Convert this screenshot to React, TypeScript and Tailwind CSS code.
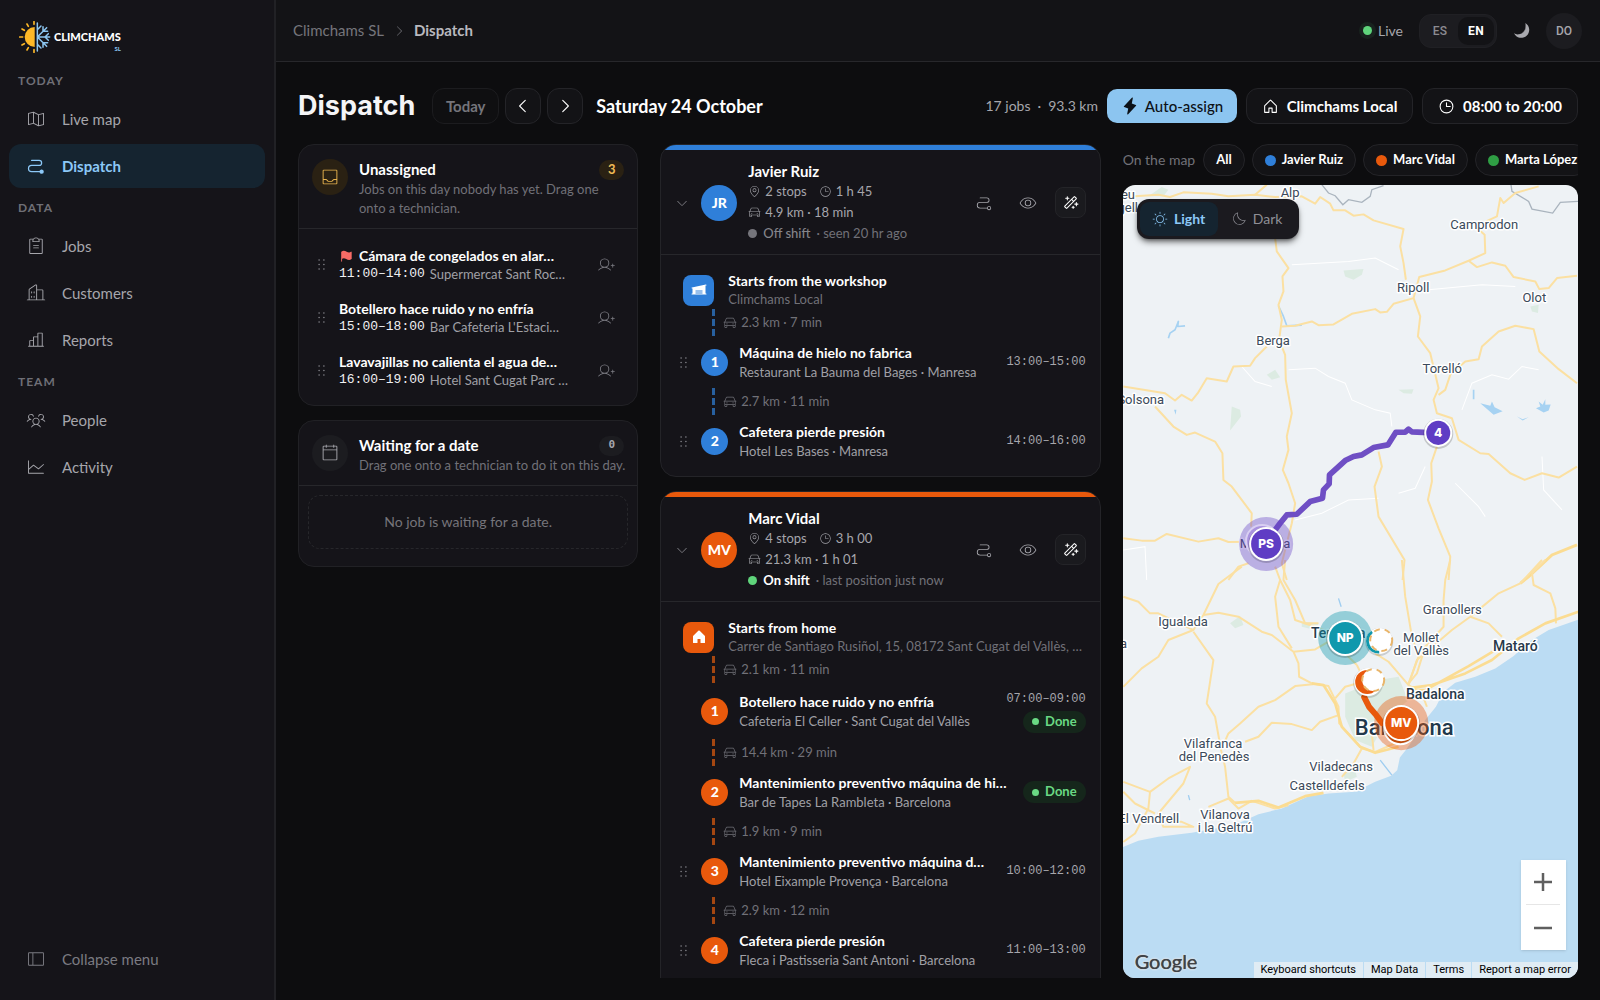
import type { ReactNode } from 'react';
import type { IconType } from 'react-icons';
import {
  PiBuildingsLight,
  PiCalendarBlankLight,
  PiCaretDownLight,
  PiCaretLeft,
  PiCaretRight,
  PiCaretRightLight,
  PiCarLight,
  PiChartBarLight,
  PiChartLineLight,
  PiClipboardTextLight,
  PiClock,
  PiClockLight,
  PiDotsSixVertical,
  PiEyeLight,
  PiFlagFill,
  PiHouse,
  PiHouseFill,
  PiLightningFill,
  PiMagicWand,
  PiMapPinLight,
  PiMapTrifoldLight,
  PiMoonLight,
  PiPathFill,
  PiPathLight,
  PiSidebarSimpleLight,
  PiSunLight,
  PiTrayLight,
  PiUserPlusLight,
  PiUsersThreeLight,
  PiWarehouseFill,
} from 'react-icons/pi';

type NavItem = { label: string; icon: IconType; active?: boolean };

const nav: { title: string; items: NavItem[] }[] = [
  {
    title: 'TODAY',
    items: [
      { label: 'Live map', icon: PiMapTrifoldLight },
      { label: 'Dispatch', icon: PiPathFill, active: true },
    ],
  },
  {
    title: 'DATA',
    items: [
      { label: 'Jobs', icon: PiClipboardTextLight },
      { label: 'Customers', icon: PiBuildingsLight },
      { label: 'Reports', icon: PiChartBarLight },
    ],
  },
  {
    title: 'TEAM',
    items: [
      { label: 'People', icon: PiUsersThreeLight },
      { label: 'Activity', icon: PiChartLineLight },
    ],
  },
];

function Logo() {
  return (
    <div className="flex items-center gap-[3px]">
      <svg viewBox="0 0 96 96" className="h-8 w-8" fill="none" aria-hidden="true">
        <path d="M47 18a30 30 0 0 0 0 60z" fill="#fdb827" />
        <g stroke="#fdb827" strokeWidth="5" strokeLinecap="round">
          <path d="M45 2v8M45 86v8M24 9l4 7M24 87l4-7M9 24l7 4M9 72l7-4M2 48h9" />
        </g>
        <g stroke="#8cc5f0" strokeWidth="4.5" strokeLinecap="round" strokeLinejoin="round">
          <path d="M55 6v84M55 48h37M55 48l28-28M55 48l28 28M55 26l11-11M55 70l11 11M72 31V17M72 31h14M72 65v14M72 65h14M78 48l10-10M78 48l10 10" />
        </g>
      </svg>
      <span className="flex flex-col items-end pt-2.5 leading-none">
        <span className="text-[11px] leading-[10px] font-black text-white">CLIMCHAMS</span>
        <span className="pt-1 text-[6px] leading-[6px] font-bold text-[#8cc5f0]">SL</span>
      </span>
    </div>
  );
}

function Sidebar() {
  return (
    <aside className="flex w-[276px] shrink-0 flex-col border-r-2 border-[#212125] bg-[#151419] px-[9px]">
      <div className="px-2.5 pt-[21px]">
        <Logo />
      </div>
      <nav className="pt-3">
        {nav.map((group) => (
          <div key={group.title} className="pb-1">
            <h2 className="flex h-8 items-center px-[9px] text-xs font-bold tracking-[1px] text-[#6f6f76]">{group.title}</h2>
            <ul className="flex flex-col gap-[3px]">
              {group.items.map(({ label, icon: Icon, active }) => (
                <li key={label}>
                  <a
                    href="#"
                    aria-current={active ? 'page' : undefined}
                    className={
                      active
                        ? 'flex h-11 items-center gap-4 rounded-xl bg-[#152430] px-[17px] text-[15px] font-bold text-[#8cc8f7]'
                        : 'flex h-11 items-center gap-4 rounded-xl px-[17px] text-[15px] text-[#a6a6ac]'
                    }
                  >
                    <Icon size={20} />
                    {label}
                  </a>
                </li>
              ))}
            </ul>
          </div>
        ))}
      </nav>
      <button type="button" className="mt-auto mb-[19px] flex h-11 items-center gap-4 px-[17px] text-[15px] text-[#7b7b82]">
        <PiSidebarSimpleLight size={20} />
        Collapse menu
      </button>
    </aside>
  );
}

function TopBar() {
  return (
    <header className="flex h-[62px] shrink-0 items-center justify-between border-b border-[#27272b] bg-[#131316] pr-[18px] pl-[17px]">
      <nav aria-label="Breadcrumb" className="flex items-center gap-2 text-[15px]">
        <a href="#" className="text-[#75757b]">
          Climchams SL
        </a>
        <PiCaretRightLight size={14} className="text-[#75757b]" />
        <span className="font-bold text-[#b9b9bf]">Dispatch</span>
      </nav>
      <div className="flex items-center">
        <span className="h-[9px] w-[9px] rounded-full bg-[#5fd47b] ring-4 ring-[#5fd47b]/8" />
        <span className="pl-1.5 text-sm text-[#a6a6ac]">Live</span>
        <div className="ml-4 flex h-[34px] items-center rounded-xl border border-[#202024] bg-[#1c1c20] p-0.5 font-['Roboto',sans-serif] text-xs font-medium tracking-wide">
          <button type="button" className="h-7 w-9 text-[#8b8b91]">
            ES
          </button>
          <button type="button" className="h-7 w-9 rounded-[10px] bg-[#131316] font-bold text-white">
            EN
          </button>
        </div>
        <button type="button" aria-label="Dark theme" className="ml-[15px] p-0.5">
          <svg viewBox="0 0 48 48" className="h-4 w-4" aria-hidden="true">
            <path d="M34 0a24 24 0 1 1-34 31a19 19 0 0 0 14 3C30 32 38 16 34 0z" fill="#a9a9ae" />
            <path d="M34 0a24 24 0 0 1-20 34C30 32 38 16 34 0z" fill="#6f6f75" />
          </svg>
        </button>
        <button type="button" className="ml-3.5 h-9 w-9 rounded-full bg-[#1c1c20] font-['Roboto',sans-serif] text-xs font-medium text-[#a6a6ac]">
          DO
        </button>
      </div>
    </header>
  );
}

const outlineButton =
  'flex h-9 items-center justify-center rounded-xl border border-[#242428] bg-[#131316] text-white';

function PageHeader() {
  return (
    <div className="flex items-center justify-between pt-[26px] pb-5">
      <div className="flex items-center">
        <h1 className="pr-[17px] font-['Inter',sans-serif] text-[27px] leading-9 font-bold text-[#f4f4f6]">Dispatch</h1>
        <button type="button" className="h-9 w-[67px] rounded-xl border border-[#1c1c1f] bg-[#0f0f11] text-[15px] font-bold text-[#75757b]">
          Today
        </button>
        <button type="button" aria-label="Previous day" className={`${outlineButton} ml-1.5 w-9`}>
          <PiCaretLeft size={18} />
        </button>
        <button type="button" aria-label="Next day" className={`${outlineButton} ml-1.5 w-9`}>
          <PiCaretRight size={18} />
        </button>
        <span className="pl-[13px] text-lg leading-6 font-bold text-white">Saturday 24 October</span>
      </div>
      <div className="flex items-center gap-[9px] text-[15px] font-bold text-white">
        <p className="flex gap-[7px] text-sm font-normal text-[#a6a6ac]">
          <span>17 jobs</span>
          <span>·</span>
          <span>93.3 km</span>
        </p>
        <button type="button" className="flex h-[34px] w-[130px] items-center justify-center gap-1.5 rounded-[10px] bg-[#8cc5f0] font-medium text-[#0c1117]">
          <PiLightningFill size={18} />
          Auto-assign
        </button>
        <button type="button" className={`${outlineButton} w-[167px] gap-2`}>
          <PiHouse size={17} />
          Climchams Local
        </button>
        <button type="button" className={`${outlineButton} w-[156px] gap-2`}>
          <PiClock size={17} />
          08:00 to 20:00
        </button>
      </div>
    </div>
  );
}

type QueueProps = {
  title: string;
  text: string;
  count: number;
  icon: ReactNode;
  warm?: boolean;
  children: ReactNode;
};

function Queue({ title, text, count, icon, warm, children }: QueueProps) {
  return (
    <section className="rounded-2xl border border-[#212125] bg-[#151419]">
      <header className="border-b border-[#27272b] px-[13px] pt-3.5 pb-2.5">
        <div className="flex gap-[11px]">
          <span
            className={
              warm
                ? 'flex h-9 w-9 shrink-0 items-center justify-center rounded-full bg-[#2a2113] text-[#e8b44f]'
                : 'flex h-9 w-9 shrink-0 items-center justify-center rounded-full bg-[#1c1c20] text-[#a6a6ac]'
            }
          >
            {icon}
          </span>
          <div className="min-w-0 flex-1">
            <div className="flex h-[21px] items-center justify-between">
              <h2 className="text-[15px] font-bold text-white">{title}</h2>
              <span
                className={
                  warm
                    ? 'flex h-5 w-[25px] items-center justify-center rounded-full bg-[#2a2113] text-[13px] font-bold text-[#f0bb55]'
                    : "flex h-5 w-[25px] items-center justify-center rounded-full bg-[#1c1c20] font-['DejaVu_Sans_Mono',monospace] text-[11px] font-bold text-[#a6a6ac]"
                }
              >
                {count}
              </span>
            </div>
            <p className={warm ? 'pr-2 text-[13px] leading-[19px] text-[#717178]' : '-mr-2 text-[13px] leading-[19px] text-[#717178]'}>{text}</p>
          </div>
        </div>
      </header>
      {children}
    </section>
  );
}

const unassigned = [
  { title: 'Cámara de congelados en alar…', time: '11:00–14:00', place: 'Supermercat Sant Roc…', flag: true },
  { title: 'Botellero hace ruido y no enfría', time: '15:00–18:00', place: "Bar Cafeteria L'Estaci…" },
  { title: 'Lavavajillas no calienta el agua de…', time: '16:00–19:00', place: 'Hotel Sant Cugat Parc …' },
];

function QueueColumn() {
  return (
    <div className="flex min-w-0 flex-col gap-3.5">
      <Queue warm title="Unassigned" text="Jobs on this day nobody has yet. Drag one onto a technician." count={3} icon={<PiTrayLight size={20} />}>
        <ul className="pt-[9px] pb-2">
          {unassigned.map((job) => (
            <li key={job.title} className="flex h-[53px] items-center px-3.5">
              <PiDotsSixVertical size={17} className="shrink-0 text-[#85858b]" />
              <div className="min-w-0 flex-1 pl-[9px]">
                <p className="flex items-center gap-1.5 text-sm leading-[19px] font-bold text-white">
                  {job.flag && <PiFlagFill size={14} className="shrink-0 text-[#f66b66]" />}
                  <span className="truncate">{job.title}</span>
                </p>
                <p className="flex gap-[5px] text-[13px] leading-[18px] text-[#a0a0a6]">
                  <span className="shrink-0 font-['Liberation_Mono',monospace] text-[#f0f0f2]">{job.time}</span>
                  <span className="whitespace-nowrap">{job.place}</span>
                </p>
              </div>
              <button type="button" aria-label="Assign" className="flex h-8 w-[34px] items-center justify-center text-[#7b7b82]">
                <PiUserPlusLight size={18} />
              </button>
            </li>
          ))}
        </ul>
      </Queue>
      <Queue title="Waiting for a date" text="Drag one onto a technician to do it on this day." count={0} icon={<PiCalendarBlankLight size={20} />}>
        <div className="px-[9px] pt-[9px] pb-[17px]">
          <p className="flex h-[54px] items-center justify-center rounded-xl border border-dashed border-[#27272b] text-sm text-[#75757b]">
            No job is waiting for a date.
          </p>
        </div>
      </Queue>
    </div>
  );
}

type Stop = { leg: string; title: string; place: string; time?: string; done?: boolean };
type Tech = {
  name: string;
  initials: string;
  stops: string;
  hours: string;
  drive: string;
  onShift: boolean;
  seen: string;
  fill: string;
  dash: string;
  start: { icon: IconType; title: string; place: string };
  route: Stop[];
};

const techs: Tech[] = [
  {
    name: 'Javier Ruiz',
    initials: 'JR',
    stops: '2 stops',
    hours: '1 h 45',
    drive: '4.9 km · 18 min',
    onShift: false,
    seen: '· seen 20 hr ago',
    fill: 'bg-[#2f7fd9]',
    dash: 'bg-[repeating-linear-gradient(#28609f_0_7px,transparent_7px_10px)]',
    start: { icon: PiWarehouseFill, title: 'Starts from the workshop', place: 'Climchams Local' },
    route: [
      { leg: '2.3 km · 7 min', title: 'Máquina de hielo no fabrica', place: 'Restaurant La Bauma del Bages · Manresa', time: '13:00–15:00' },
      { leg: '2.7 km · 11 min', title: 'Cafetera pierde presión', place: 'Hotel Les Bases · Manresa', time: '14:00–16:00' },
    ],
  },
  {
    name: 'Marc Vidal',
    initials: 'MV',
    stops: '4 stops',
    hours: '3 h 00',
    drive: '21.3 km · 1 h 01',
    onShift: true,
    seen: '· last position just now',
    fill: 'bg-[#e8590c]',
    dash: 'bg-[repeating-linear-gradient(#a54711_0_7px,transparent_7px_10px)]',
    start: { icon: PiHouseFill, title: 'Starts from home', place: 'Carrer de Santiago Rusiñol, 15, 08172 Sant Cugat del Vallès, …' },
    route: [
      { leg: '2.1 km · 11 min', title: 'Botellero hace ruido y no enfría', place: 'Cafeteria El Celler · Sant Cugat del Vallès', time: '07:00–09:00', done: true },
      { leg: '14.4 km · 29 min', title: 'Mantenimiento preventivo máquina de hi…', place: 'Bar de Tapes La Rambleta · Barcelona', done: true },
      { leg: '1.9 km · 9 min', title: 'Mantenimiento preventivo máquina d…', place: 'Hotel Eixample Provença · Barcelona', time: '10:00–12:00' },
      { leg: '2.9 km · 12 min', title: 'Cafetera pierde presión', place: 'Fleca i Pastisseria Sant Antoni · Barcelona', time: '11:00–13:00' },
    ],
  },
];

function TechCard({ tech }: { tech: Tech }) {
  const StartIcon = tech.start.icon;
  return (
    <section className="shrink-0 overflow-hidden rounded-2xl border border-[#242428] bg-[#151419]">
      <div className={`h-[5px] ${tech.fill}`} />
      <header className="flex items-center border-b border-[#27272b] pt-[11px] pr-3.5 pb-2.5 pl-3.5">
        <button type="button" aria-label="Collapse" className="text-[#8b8b91]">
          <PiCaretDownLight size={14} />
        </button>
        <span className={`ml-3 flex h-9 w-9 items-center justify-center rounded-full text-sm font-black text-white ${tech.fill}`}>
          {tech.initials}
        </span>
        <div className="ml-[11px] flex-1 text-[13px] leading-[21px] text-[#a6a6ac]">
          <h2 className="text-[15px] leading-5 font-bold text-white">{tech.name}</h2>
          <p className="flex items-center gap-1">
            <PiMapPinLight size={13} />
            <span className="pr-2">{tech.stops}</span>
            <PiClockLight size={13} />
            <span>{tech.hours}</span>
          </p>
          <p className="flex items-center gap-1">
            <PiCarLight size={13} />
            <span>{tech.drive}</span>
          </p>
          <p className="flex items-center gap-1.5">
            <span className={tech.onShift ? 'h-[9px] w-[9px] rounded-full bg-[#5fd47b]' : 'h-[9px] w-[9px] rounded-full bg-[#75757b]'} />
            <span className={tech.onShift ? 'font-bold text-white' : 'font-medium text-[#85858b]'}>{tech.onShift ? 'On shift' : 'Off shift'}</span>
            <span className="text-[#717178]">{tech.seen}</span>
          </p>
        </div>
        <div className="flex items-center text-[#a6a6ac]">
          <button type="button" aria-label="Show route" className="flex h-[31px] w-11 items-center justify-center">
            <PiPathLight size={18} />
          </button>
          <button type="button" aria-label="Show on map" className="flex h-[31px] w-11 items-center justify-center">
            <PiEyeLight size={18} />
          </button>
          <button
            type="button"
            aria-label="Optimise"
            className="ml-[5px] flex h-[31px] w-[31px] items-center justify-center rounded-lg border border-[#242428] bg-[#1a1a1e] text-white"
          >
            <PiMagicWand size={17} />
          </button>
        </div>
      </header>
      <div className={tech.onShift ? 'pt-4 pr-3.5 pb-8' : 'pt-4 pr-3.5 pb-[9px]'}>
        <div className="flex h-[38px] items-center pl-[22px]">
          <span className={`flex h-[31px] w-[31px] shrink-0 items-center justify-center rounded-lg text-white ${tech.fill}`}>
            <StartIcon size={16} />
          </span>
          <div className="min-w-0 pl-3.5">
            <p className="truncate text-sm leading-[18px] font-bold text-white">{tech.start.title}</p>
            <p className="truncate text-[13px] leading-[18px] text-[#717178]">{tech.start.place}</p>
          </div>
        </div>
        <ol>
          {tech.route.map((stop, i) => (
            <li key={stop.leg}>
              <div className="flex h-[27px] items-center pl-[51px] text-[13px] text-[#717178]">
                <span className={`h-[27px] w-[3px] ${tech.dash}`} />
                <PiCarLight size={14} className="ml-2" />
                <span className="pl-1">{stop.leg}</span>
              </div>
              <div className={stop.time && stop.done ? 'flex h-14 items-center' : 'flex h-[52px] items-center'}>
                <span className="flex w-10 justify-center pl-1">
                  {!stop.done && <PiDotsSixVertical size={17} className="text-[#85858b]" />}
                </span>
                <span className={`flex h-[27px] w-[27px] shrink-0 items-center justify-center rounded-full text-sm font-black text-white ${tech.fill}`}>
                  {i + 1}
                </span>
                <div className="min-w-0 flex-1 pl-[11px]">
                  <p className="truncate text-sm leading-[20px] font-bold text-white">{stop.title}</p>
                  <p className="truncate text-[13px] leading-[18px] text-[#a0a0a6]">{stop.place}</p>
                </div>
                <div className="flex flex-col items-end gap-[3px] pl-2">
                  {stop.time && (
                    <span className="font-['Liberation_Mono',monospace] text-xs leading-[18px] text-[#a6a6ac]">{stop.time}</span>
                  )}
                  {stop.done && (
                    <span className="flex h-[22px] items-center gap-1.5 rounded-full bg-[#15261b] px-[9px] text-[13px] font-bold text-[#6ad984]">
                      <span className="h-[7px] w-[7px] rounded-full bg-[#6ad984]" />
                      Done
                    </span>
                  )}
                </div>
              </div>
            </li>
          ))}
        </ol>
      </div>
    </section>
  );
}

const upperRoads = [
  'M20 52L130 45L165 52L205 38L290 42L340 50L420 45L480 52L560 50L600 72L615 52L645 72L655 92L690 92L715 108L745 104L775 122L865 148L855 200L865 250L872 300',
  'M420 45L455 15',
  'M480 175L485 215L520 265L502 290L505 335L490 375L500 420L492 480L510 525L512 600L530 700L515 770L520 810L503 870L520 910L540 970L530 1030L500 1150L515 1200',
  'M500 440L540 438L590 425L610 436L655 434L710 402L780 388L795 398L815 396L835 372L895 355L912 292L990 272L1060 243L1110 220L1108 165L1080 140L1145 110L1155 55L1165 70L1200 40L1270 20',
  'M1060 243L1085 262L1130 248L1170 258L1195 292L1260 305L1272 328L1300 325L1325 295L1385 288',
  'M895 355L915 410L908 470L945 520L970 625L955 660L965 700L1010 715L1030 780L1095 820L1120 822L1185 880L1228 900L1280 880L1330 893L1385 860',
  'M970 645L990 630L1005 585L1050 545L1090 538L1100 500L1150 455L1200 438L1255 448L1272 515L1330 568L1385 610',
  'M965 800L948 850L950 905L938 960L970 1045L1005 1130L1000 1200',
  'M455 500L420 535L405 558L355 560L335 605L275 595L248 640L230 662L200 645L180 662L150 640L25 620',
  'M120 680L175 740L215 765L240 758L300 785L322 820L325 900L350 920L410 1000L408 1040',
  'M790 815L800 860L778 920L790 1010L868 1140L862 1200',
  'M25 1075L80 1082L120 1082L155 1062L250 1085L310 1075L340 1086L400 1085M400 1150L370 1160L340 1200',
];

const lowerRoads = [
  'M380 20L310 72L265 165L235 210L130 160L105 160L70 125L25 110M235 210L160 240L130 290L80 325L25 380',
  'M265 165L310 158L370 170L440 215L470 225L535 275L550 310L552 350L590 370L640 378L670 440L672 490L740 565L780 575L850 545',
  'M600 372L540 378L480 420L430 440L375 490L340 520L318 570L330 620L340 710L360 728',
  'M235 215L295 300L275 430L300 470L318 570',
  'M670 465L615 485L590 510L530 492L470 488L430 530L390 545',
  'M480 20L495 60L480 110L490 200L530 265M495 60L525 120L540 180L600 200L640 215L700 290L725 315',
  'M510 0L505 60L540 120L570 190L610 190M535 275L600 268L640 245',
  'M860 0L870 110L890 230L910 290L880 370M1005 0L990 60L985 120L985 200L930 260L905 340L880 370',
  'M1280 0L1215 70L1150 100L1095 145L1065 170L1010 210L905 300L880 375M1065 170L1120 190L1160 230',
  'M1250 40L1255 75L1305 100L1320 145L1322 190M1250 40L1290 0',
  'M780 280L820 305L850 340L880 375L920 400L935 440M725 315L740 345M660 415L690 380L720 372',
  'M25 845L60 820L100 745L105 695L25 665M105 695L160 655L225 620L205 670L130 760L145 800L235 800L200 785L150 785',
  'M25 695L60 730L120 760M280 740L340 715L370 745L410 722L480 745L520 735',
  'M740 565L715 610L680 650M770 520L775 570',
];

const whiteRoads = [
  'M530 255L700 245L780 235L850 270',
  'M380 560L420 605L470 620M520 570L600 565L640 590L690 610L710 660L780 690L825 700L830 740',
  'M1040 690L1070 610L1130 585L1180 598L1220 560L1270 570',
  'M1020 910L1090 980L1110 1010M850 940L900 925L930 860M540 1020L620 1000L700 960L790 955',
  'M940 330L1100 315L1200 320',
  'M1280 830L1285 930L1340 990',
  'M25 1110L90 1100L95 1200',
];

type Label = { x: number; y: number; text: string; end?: boolean; strong?: boolean };
const labels: Label[] = [
  { x: 12, y: 14, text: 'la Seu', end: true },
  { x: 15, y: 27, text: "d'Urgell", end: true },
  { x: 167, y: 12, text: 'Alp' },
  { x: 361, y: 44, text: 'Camprodon' },
  { x: 290, y: 107, text: 'Ripoll' },
  { x: 411, y: 117, text: 'Olot' },
  { x: 150, y: 160, text: 'Berga' },
  { x: 319, y: 188, text: 'Torelló' },
  { x: 41, y: 219, text: 'Solsona', end: true },
  { x: 142, y: 363, text: 'Manresa' },
  { x: 60, y: 441, text: 'Igualada' },
  { x: 329, y: 429, text: 'Granollers' },
  { x: 298, y: 457, text: 'Mollet' },
  { x: 298, y: 470, text: 'del Vallès' },
  { x: 392, y: 466, text: 'Mataró', strong: true },
  { x: 215, y: 453, text: 'Terrassa', strong: true },
  { x: 312, y: 514, text: 'Badalona', strong: true },
  { x: 90, y: 563, text: 'Vilafranca' },
  { x: 91, y: 576, text: 'del Penedès' },
  { x: 218, y: 586, text: 'Viladecans' },
  { x: 204, y: 605, text: 'Castelldefels' },
  { x: 4, y: 463, text: 'Cervera', end: true },
  { x: 56, y: 638, text: 'El Vendrell', end: true },
  { x: 102, y: 634, text: 'Vilanova' },
  { x: 102, y: 647, text: 'i la Geltrú' },
];

function Pin({ x, y, r, fill, text }: { x: number; y: number; r: number; fill: string; text: string }) {
  return (
    <g>
      <circle cx={x} cy={y + 1} r={r + 3} fill="#000" opacity="0.18" />
      <circle cx={x} cy={y} r={r + 2} fill="#fff" />
      <circle cx={x} cy={y} r={r} fill={fill} />
      <text x={x} y={y + 4} textAnchor="middle" className="font-['Inter',sans-serif] text-xs font-extrabold" fill="#fff">
        {text}
      </text>
    </g>
  );
}

function MapDrawing() {
  return (
    <svg
      viewBox="0 0 455 793"
      preserveAspectRatio="xMidYMid slice"
      className="absolute inset-0 h-full w-full"
      role="img"
      aria-label="Map of Catalonia with technician routes"
    >
      <rect width="455" height="793" fill="#eef2f5" />
      <g transform="translate(-8 375) scale(.33333)">
        <path d="M690 400L740 380L790 360L850 350L870 400L880 420L820 470L770 560L720 540L690 470z" fill="#dcebe2" />
        <path d="M345 190L375 168L385 195L360 205zM560 185L610 190L600 210L560 200zM685 640L720 630L725 650L690 665z" fill="#dcebe2" />
        <path
          d="M1400 175L1300 210L1245 243L1195 288L1140 325L1080 350L1020 368L985 395L962 440L930 480L900 530L870 572L854 592L846 630L828 647L780 665L720 695L640 700L580 708L500 745L430 762L380 785L330 800L230 818L130 830L70 842L20 862V1270H1400z"
          fill="#bbdcf3"
        />
        <path d="M795 600L830 645M220 705L224 720M670 115L678 140" stroke="#9fcdf0" strokeWidth="4" fill="none" />
      </g>
      <g transform="translate(-8 -5) scale(.33333)">
        <path
          d="M685 272L745 268L740 285L715 300L690 290zM455 585L480 570L495 592L470 600zM850 630L895 628L890 642L865 640zM1245 380L1270 375L1268 400L1250 395zM350 680L375 690L378 710L345 752zM100 50L140 22L160 30L145 50z"
          fill="#dcebe2"
        />
        <path
          d="M490 378L505 410L515 438L560 436M160 475L165 460L180 450L190 425L188 440L210 438M1075 630V658"
          stroke="#a6d2f2"
          strokeWidth="5"
          fill="none"
          strokeLinejoin="round"
        />
        <path
          d="M1095 670L1125 678L1130 665L1138 682L1162 694L1135 705zM1205 710L1222 718L1240 712L1222 722zM1262 685L1275 680L1270 665L1282 675L1290 658L1290 675L1306 674L1300 692L1285 698zM177 690L184 690L182 705z"
          fill="#a6d2f2"
        />
        <path
          d="M620 15L640 40L660 48L683 75L700 60L740 68L765 50L770 30L805 18M1187 15L1190 35L1240 65L1250 88L1312 100L1335 68L1390 65"
          stroke="#aab4be"
          strokeWidth="4"
          fill="none"
        />
        {whiteRoads.map((d) => (
          <path key={d} d={d} stroke="#fff" strokeWidth="3" fill="none" />
        ))}
        {upperRoads.map((d) => (
          <path key={d} d={d} stroke="#fbe0a2" strokeWidth="6" fill="none" strokeLinejoin="round" />
        ))}
        <path d="M1385 1095L1310 1125L1240 1190L1215 1210" stroke="#fbdc92" strokeWidth="9" fill="none" />
      </g>
      <g transform="translate(-8 375) scale(.33333)" fill="none" strokeLinejoin="round">
        {lowerRoads.map((d) => (
          <path key={d} d={d} stroke="#fbe0a2" strokeWidth="6" />
        ))}
        <path
          d="M590 370L625 375L660 430L680 500L735 560L780 578L850 560M360 728L430 722L490 742L570 708L625 698M875 385L950 375L1050 340L1130 300L1210 235L1290 190L1390 155M880 390L930 390L1060 318L1140 270"
          stroke="#fbdc92"
          strokeWidth="8"
        />
      </g>
      {labels.map((l) => (
        <text
          key={l.text}
          x={l.x}
          y={l.y}
          textAnchor={l.end ? 'end' : 'middle'}
          paintOrder="stroke"
          stroke="#fff"
          strokeWidth="3"
          strokeLinejoin="round"
          fill={l.strong ? '#27394a' : '#3b4a5a'}
          className={l.strong ? "font-['Roboto',sans-serif] text-sm font-medium" : "font-['Roboto',sans-serif] text-[13px]"}
        >
          {l.text}
        </text>
      ))}
      <text
        x="281"
        y="550"
        textAnchor="middle"
        paintOrder="stroke"
        stroke="#fff"
        strokeWidth="3"
        fill="#22384b"
        className="font-['Roboto',sans-serif] text-[22px] font-medium"
      >
        Barcelona
      </text>

      <g transform="translate(-8 -5) scale(.33333)" fill="none" strokeLinejoin="round">
        <path
          d="M480 1050L495 1030L515 1005L545 1003L585 965L622 955L625 930L642 912L643 885L690 842L715 830L740 825L775 803L818 795L842 757L870 757L880 748L890 756L940 758"
          stroke="#6f4fc4"
          strokeWidth="17"
        />
      </g>
      <path d="M241 512L246 522L253 530L259 538" stroke="#e8590c" strokeWidth="6" fill="none" strokeLinecap="round" />

      <circle cx="143" cy="359" r="27" fill="#6741c4" opacity="0.38" />
      <circle cx="139" cy="356" r="16" fill="#a992df" stroke="#d9cff2" strokeWidth="2" />
      <Pin x={143} y={359} r={15} fill="#5f3dc4" text="PS" />
      <Pin x={315} y={248} r={12} fill="#5f3dc4" text="4" />

      <circle cx="222" cy="453" r="27" fill="#1098ad" opacity="0.4" />
      <Pin x={222} y={453} r={16} fill="#1098ad" text="NP" />
      <circle cx="256" cy="457" r="14" fill="#000" opacity="0.15" />
      <circle cx="256" cy="456" r="13" fill="#fff" />
      <path d="M249 447a11 11 0 0 0 7 20" stroke="#1098ad" strokeWidth="3" fill="none" />
      <circle cx="258" cy="455" r="11" fill="#fff" stroke="#e9b56a" strokeWidth="2" strokeDasharray="6 5" />

      <circle cx="245" cy="498" r="15" fill="#000" opacity="0.15" />
      <circle cx="245" cy="497" r="14" fill="#fff" />
      <circle cx="244" cy="497" r="12" fill="#e8590c" />
      <circle cx="250" cy="495" r="11" fill="#fff" stroke="#e9b56a" strokeWidth="2" strokeDasharray="6 5" />

      <circle cx="278" cy="538" r="27" fill="#e8590c" opacity="0.4" />
      <circle cx="277" cy="543" r="16" fill="#e8590c" stroke="#fff" strokeWidth="2" />
      <Pin x={278} y={538} r={16} fill="#e8590c" text="MV" />
    </svg>
  );
}

const chips = [
  { name: 'Javier Ruiz', dot: 'bg-[#2f7fd9]' },
  { name: 'Marc Vidal', dot: 'bg-[#e8590c]' },
  { name: 'Marta López', dot: 'bg-[#2f9e44]' },
];

const chipBase = 'flex h-8 shrink-0 items-center gap-1.5 rounded-full border border-[#242428] bg-[#131316] px-3';

function MapColumn() {
  return (
    <div className="flex min-h-0 min-w-0 flex-col gap-[9px]">
      <div className="flex items-center gap-[7px] overflow-hidden text-[13px] font-bold text-white">
        <span className="shrink-0 pr-px text-sm font-normal text-[#717178]">On the map</span>
        <button type="button" className={chipBase}>
          All
        </button>
        {chips.map((c) => (
          <button key={c.name} type="button" className={chipBase}>
            <span className={`h-[11px] w-[11px] rounded-full ${c.dot}`} />
            {c.name}
          </button>
        ))}
      </div>
      <div className="relative min-h-0 flex-1 overflow-hidden rounded-xl font-['Roboto',sans-serif]">
        <MapDrawing />
        <div className="absolute top-3.5 left-3.5 flex rounded-xl bg-[#1b1a1f] p-[3px] font-['Lato',sans-serif] text-sm shadow-md shadow-black/50">
          <button type="button" className="flex h-[34px] w-[78px] items-center justify-center gap-1.5 rounded-[9px] bg-[#152430] font-bold text-[#8cc8f7]">
            <PiSunLight size={16} />
            Light
          </button>
          <button type="button" className="flex h-[34px] w-[78px] items-center justify-center gap-1.5 text-[#8f8f96]">
            <PiMoonLight size={16} />
            Dark
          </button>
        </div>
        <div className="absolute right-3 bottom-7 flex w-[45px] flex-col items-center bg-white text-[#5f5f5f] shadow">
          <button type="button" aria-label="Zoom in" className="flex h-11 w-full items-center justify-center">
            <svg viewBox="0 0 18 18" className="h-[18px] w-[18px]" stroke="currentColor" strokeWidth="2.5" aria-hidden="true">
              <path d="M9 0v18M0 9h18" />
            </svg>
          </button>
          <span className="h-px w-[34px] bg-[#e6e6e6]" />
          <button type="button" aria-label="Zoom out" className="flex h-[45px] w-full items-center justify-center">
            <svg viewBox="0 0 18 18" className="h-[18px] w-[18px]" stroke="currentColor" strokeWidth="2.5" aria-hidden="true">
              <path d="M0 9h18" />
            </svg>
          </button>
        </div>
        <span className="absolute bottom-[5px] left-3 font-['Lato',sans-serif] text-xl leading-6 text-[#3f4246] [text-shadow:0_0_1px_#3f4246,0_0_2px_#fff,0_0_2px_#fff,0_0_2px_#fff]">
          Google
        </span>
        <div className="absolute right-0 bottom-0 flex h-4 items-center gap-px text-[11px] text-black">
          {['Keyboard shortcuts', 'Map Data', 'Terms', 'Report a map error'].map((t) => (
            <a key={t} href="#" className="flex h-full items-center bg-[#f5f5f5]/65 px-[7px]">
              {t}
            </a>
          ))}
        </div>
      </div>
    </div>
  );
}

export default function App() {
  return (
    <div className="flex h-screen overflow-hidden bg-[#0d0d0f] font-['Lato',sans-serif]">
      <Sidebar />
      <div className="flex min-w-0 flex-1 flex-col">
        <TopBar />
        <main className="flex min-h-0 flex-1 flex-col px-[22px] pb-[22px]">
          <PageHeader />
          <div className="grid min-h-0 flex-1 grid-cols-[minmax(0,340fr)_minmax(0,440fr)_minmax(0,455fr)] grid-rows-[minmax(0,1fr)] gap-[22px]">
            <QueueColumn />
            <div className="flex min-h-0 flex-col gap-3.5 overflow-hidden">
              {techs.map((tech) => (
                <TechCard key={tech.name} tech={tech} />
              ))}
            </div>
            <MapColumn />
          </div>
        </main>
      </div>
    </div>
  );
}
